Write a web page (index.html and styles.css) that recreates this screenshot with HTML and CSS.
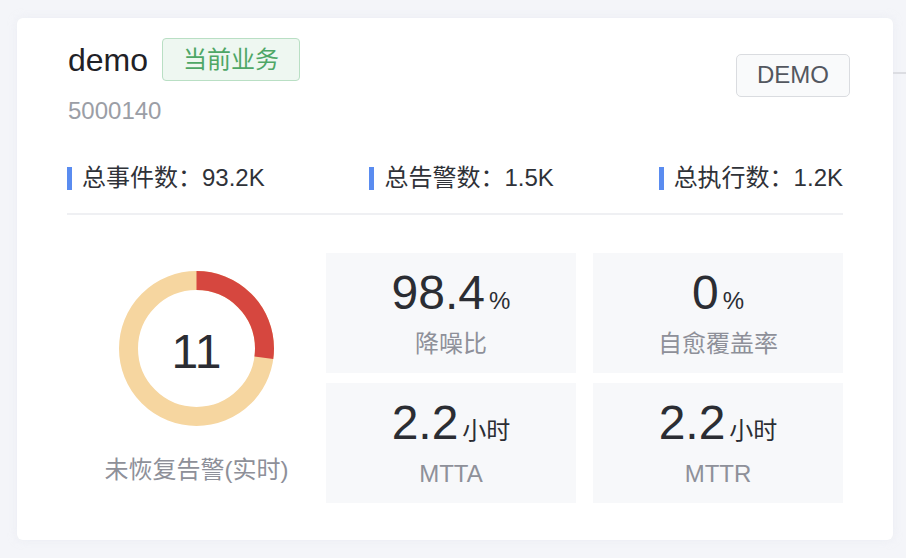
FILE: index.html
```html
<!DOCTYPE html>
<html lang="zh-CN">
<head>
<meta charset="utf-8">
<link rel="stylesheet" href="styles.css">
</head>
<body>
<div class="page">
  <div class="card">
    <div class="head">
      <div class="head-left">
        <div class="title-row">
          <span class="title">demo</span>
          <span class="tag">当前业务</span>
        </div>
        <div class="code">5000140</div>
      </div>
      <div class="env">DEMO</div>
    </div>

    <div class="stats">
      <div class="stat"><span class="bar"></span><span>总事件数：93.2K</span></div>
      <div class="stat"><span class="bar"></span><span>总告警数：1.5K</span></div>
      <div class="stat"><span class="bar"></span><span>总执行数：1.2K</span></div>
    </div>

    <div class="divider"></div>

    <div class="body">
      <div class="donut-col">
        <div class="donut">
          <svg width="155" height="155" viewBox="0 0 155 155">
            <circle cx="77.5" cy="77.5" r="68" fill="none" stroke="#f6d6a0" stroke-width="19"/>
            <circle cx="77.5" cy="77.5" r="68" fill="none" stroke="#d6473f" stroke-width="19"
                    stroke-dasharray="116 428" transform="rotate(-90 77.5 77.5)"/>
          </svg>
          <span class="donut-num">11</span>
        </div>
        <div class="donut-label">未恢复告警(实时)</div>
      </div>

      <div class="grid">
        <div class="metric">
          <div class="value">98.4<span class="unit">%</span></div>
          <div class="label">降噪比</div>
        </div>
        <div class="metric">
          <div class="value">0<span class="unit">%</span></div>
          <div class="label">自愈覆盖率</div>
        </div>
        <div class="metric">
          <div class="value">2.2<span class="unit">小时</span></div>
          <div class="label">MTTA</div>
        </div>
        <div class="metric">
          <div class="value">2.2<span class="unit">小时</span></div>
          <div class="label">MTTR</div>
        </div>
      </div>
    </div>
  </div>
  <div class="side"></div>
</div>
</body>
</html>
```

FILE: styles.css
```css
* { box-sizing: border-box; }

html, body {
  margin: 0;
  padding: 0;
  background: #f4f5f9;
}

body {
  font-family: "Liberation Sans", "Noto Sans CJK SC", sans-serif;
  color: #2b2d33;
  width: 906px;
  height: 558px;
  overflow: hidden;
}

.page {
  display: flex;
  padding: 18px 0 0 17px;
}

.card {
  width: 876px;
  height: 522px;
  background: #ffffff;
  border-radius: 6px;
  box-shadow: 0 0 10px rgba(220, 224, 236, 0.35);
  padding: 20px 50px 0 50px;
  display: flex;
  flex-direction: column;
}

.side {
  flex: 1;
  margin-top: 54px;
  height: 2px;
  background: #dcdde2;
}

.head {
  display: flex;
  justify-content: space-between;
  align-items: flex-start;
  margin-right: -7px;
}

.head-left {
  display: flex;
  flex-direction: column;
}

.title-row {
  display: flex;
  align-items: center;
  height: 43px;
}

.title {
  font-size: 32px;
  line-height: 43px;
  color: #1f2126;
  margin-left: 1px;
  margin-top: 2px;
}

.tag {
  margin-left: 14px;
  height: 43px;
  line-height: 41px;
  padding: 0 20px;
  font-size: 24px;
  color: #4ea766;
  background: #eef7f1;
  border: 1.5px solid #b9dfc4;
  border-radius: 4px;
}

.code {
  margin-top: 12px;
  margin-left: 1px;
  font-size: 24px;
  line-height: 36px;
  color: #9b9ea6;
}

.env {
  margin-top: 16px;
  height: 43px;
  line-height: 40px;
  padding: 0 20px;
  font-size: 24px;
  color: #53575f;
  background: #f9fafb;
  border: 1.5px solid #dadce0;
  border-radius: 5px;
}

.stats {
  margin-top: 31px;
  display: flex;
  justify-content: space-between;
}

.stat {
  display: flex;
  align-items: center;
  font-size: 24px;
  line-height: 36px;
  color: #2f3238;
}

.bar {
  width: 5px;
  height: 23px;
  background: #5a8cf0;
  margin-right: 10px;
}

.divider {
  margin-top: 17px;
  height: 2px;
  background: #eff0f3;
}

.body {
  margin-top: 38px;
  display: flex;
}

.donut-col {
  width: 260px;
  display: flex;
  flex-direction: column;
  align-items: center;
  justify-content: center;
  padding-top: 2px;
}

.donut {
  position: relative;
  width: 155px;
  height: 155px;
}

.donut svg { display: block; }

.donut-num {
  position: absolute;
  left: 0;
  right: 0;
  top: 0;
  bottom: 0;
  display: flex;
  align-items: center;
  justify-content: center;
  font-size: 48px;
  padding-top: 6px;
  color: #2b2d33;
}

.donut-label {
  margin-top: 26px;
  font-size: 24px;
  line-height: 36px;
  color: #8e9099;
}

.grid {
  display: grid;
  grid-template-columns: 250px 250px;
  grid-template-rows: 120px 120px;
  column-gap: 17px;
  row-gap: 10px;
}

.metric {
  background: #f7f8fa;
  display: flex;
  flex-direction: column;
  align-items: center;
  justify-content: center;
}

.value {
  font-size: 48px;
  line-height: 52px;
  color: #2b2d33;
  display: flex;
  align-items: baseline;
}

.unit {
  font-size: 24px;
  margin-left: 4px;
}

.label {
  margin-top: 1px;
  font-size: 24px;
  line-height: 32px;
  color: #8e9099;
}
```
